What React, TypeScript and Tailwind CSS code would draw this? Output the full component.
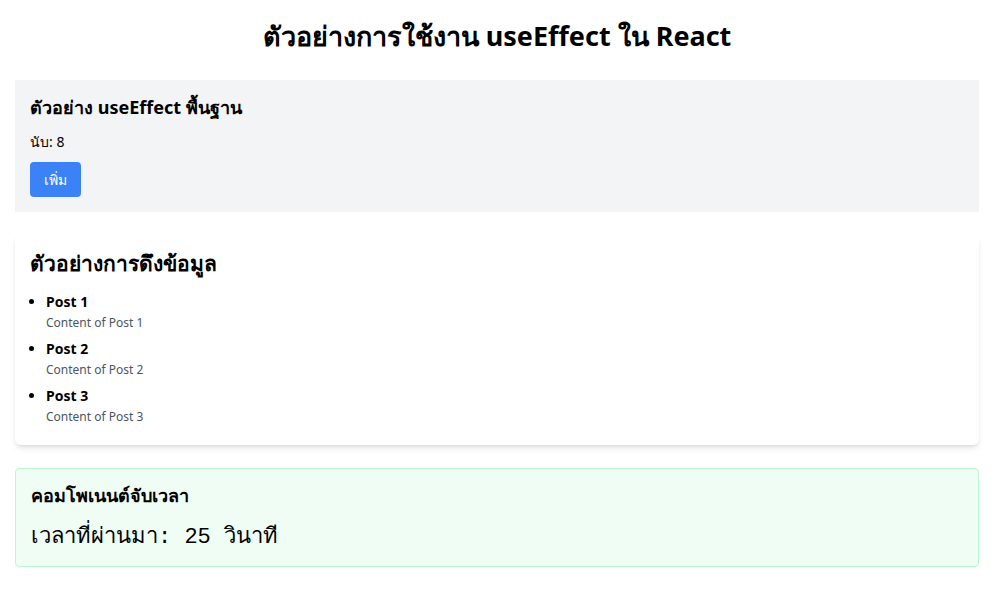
import React from "react";

export default function App() {
  const posts = [1, 2, 3];
  return (
    <div className="min-h-screen bg-white px-[15px] pt-[15px] text-black">
      <h1 className="mb-[26px] mt-[3px] text-center text-[27px] font-bold leading-[36px]">
        ตัวอย่างการใช้งาน useEffect ใน React
      </h1>

      <div className="mb-[23px] bg-[#f3f4f6] px-[15px] pb-[15px] pt-[13px]">
        <h2 className="mb-[11px] text-[18px] font-bold leading-[28px]">ตัวอย่าง useEffect พื้นฐาน</h2>
        <p className="mb-[10px] text-[14px] leading-[20px]">นับ: 8</p>
        <button className="h-[35px] rounded bg-[#3b82f6] px-[14px] text-[14px] leading-[20px] text-white">
          เพิ่ม
        </button>
      </div>

      <div className="mb-[23px] rounded-md bg-white px-[15px] pb-[18px] pt-[14px] shadow-md">
        <h2 className="mb-[14px] text-[21px] font-bold leading-[28px]">ตัวอย่างการดึงข้อมูล</h2>
        <ul className="list-disc space-y-[5px] pl-[16px]">
          {posts.map((n) => (
            <li key={n} className="text-[14px]">
              <div className="font-bold leading-[20px]">Post {n}</div>
              <div className="mt-[1px] text-[12px] leading-[20px] text-[#4b5563]">Content of Post {n}</div>
            </li>
          ))}
        </ul>
      </div>

      <div className="rounded border border-[#bbf7d0] bg-[#f0fdf4] px-[15px] pb-[14px] pt-[12px]">
        <h3 className="mb-[15px] text-[18px] font-bold leading-[28px]">คอมโพเนนต์จับเวลา</h3>
        <p className="font-mono text-[22px] leading-[28px]">เวลาที่ผ่านมา: 25 วินาที</p>
      </div>
    </div>
  );
}
